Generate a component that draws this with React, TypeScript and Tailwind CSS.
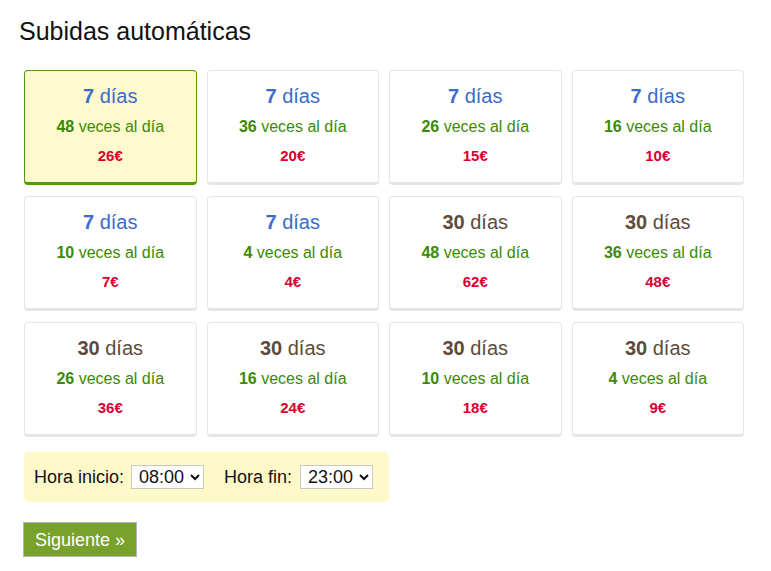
import React from "react";

type Plan = { days: number; times: number; price: number };

const plans: Plan[] = [
  { days: 7, times: 48, price: 26 },
  { days: 7, times: 36, price: 20 },
  { days: 7, times: 26, price: 15 },
  { days: 7, times: 16, price: 10 },
  { days: 7, times: 10, price: 7 },
  { days: 7, times: 4, price: 4 },
  { days: 30, times: 48, price: 62 },
  { days: 30, times: 36, price: 48 },
  { days: 30, times: 26, price: 36 },
  { days: 30, times: 16, price: 24 },
  { days: 30, times: 10, price: 18 },
  { days: 30, times: 4, price: 9 },
];

const hours = Array.from({ length: 24 }, (_, i) => `${String(i).padStart(2, "0")}:00`);

export default function App() {
  return (
    <div className="w-[771px] h-[571px] bg-white text-[#111] font-['Liberation_Sans',Arial,sans-serif]">
      <h1 className="pl-[19px] pt-[16px] text-[25px] leading-[30px] font-normal">Subidas automáticas</h1>
      <div className="ml-[24px] mt-[24px] w-[720px] grid grid-cols-4 gap-x-[10px] gap-y-[11px]">
        {plans.map((p, i) => {
          const selected = i === 0;
          return (
            <div
              key={i}
              className={
                "h-[115px] rounded-[4px] border border-b-[3px] pt-[13px] flex flex-col items-center " +
                (selected ? "bg-[#fffacd] border-[#4d9c0c]" : "bg-white border-[#e6e6e6]")
              }
            >
              <div className={"text-[20px] leading-[24px] " + (p.days === 7 ? "text-[#3b6bcc]" : "text-[#5e4b3c]")}>
                <b>{p.days}</b> días
              </div>
              <div className="mt-[7px] text-[16px] leading-[24px] text-[#3b8a07]">
                <b>{p.times}</b> veces al día
              </div>
              <div className="mt-[7px] text-[15px] leading-[20px] font-bold text-[#d8002f]">{p.price}€</div>
            </div>
          );
        })}
      </div>
      <div className="ml-[24px] mt-[15px] w-[365px] h-[50px] rounded-[5px] bg-[#fff9c9] flex items-center pl-[10px] text-[18px]">
        <span>Hora inicio:</span>
        <select
          defaultValue="08:00"
          className="ml-[7px] w-[73px] h-[24px] border border-[#c8c8c8] bg-white text-[18px] pl-[3px]"
        >
          {hours.map((h) => (
            <option key={h}>{h}</option>
          ))}
        </select>
        <span className="ml-[20px]">Hora fin:</span>
        <select
          defaultValue="23:00"
          className="ml-[8px] w-[73px] h-[24px] border border-[#c8c8c8] bg-white text-[18px] pl-[3px]"
        >
          {hours.map((h) => (
            <option key={h}>{h}</option>
          ))}
        </select>
      </div>
      <button className="ml-[23px] mt-[20px] w-[114px] h-[35px] bg-[#78a22c] border border-[#b5b5b5] text-white text-[18px] leading-none">
        Siguiente »
      </button>
    </div>
  );
}
